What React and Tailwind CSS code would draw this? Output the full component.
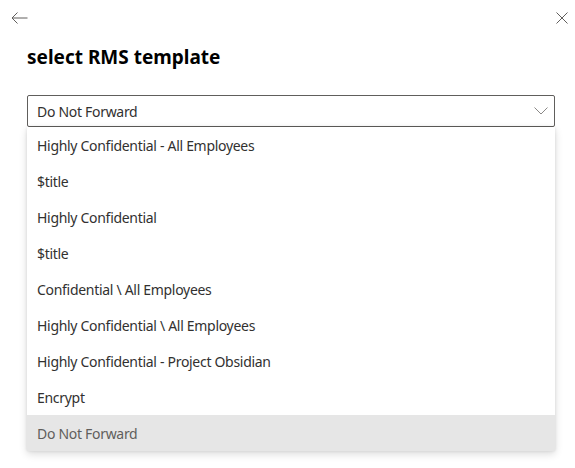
import { useState } from "react";

const options = [
  "Highly Confidential - All Employees",
  "$title",
  "Highly Confidential",
  "$title",
  "Confidential \\ All Employees",
  "Highly Confidential \\ All Employees",
  "Highly Confidential - Project Obsidian",
  "Encrypt",
  "Do Not Forward",
];

const App = () => {
  const [selected, setSelected] = useState("Do Not Forward");

  return (
    <div
      className="w-[575px] h-[468px] bg-white text-[#323130] relative overflow-hidden"
      style={{ fontFamily: '"Segoe UI", "Noto Sans", sans-serif' }}
    >
      {/* Top bar */}
      <div className="flex items-center justify-between pl-[11px] pr-[7px] pt-[9px] h-[26px]">
        <button className="text-[#605e5c]" aria-label="Back">
          <svg width="17" height="12" viewBox="0 0 17 12" fill="none" stroke="currentColor" strokeWidth="1">
            <path d="M16.5 6H1M6.5 0.5L1 6l5.5 5.5" />
          </svg>
        </button>
        <button className="text-[#605e5c]" aria-label="Close">
          <svg width="12" height="12" viewBox="0 0 12 12" fill="none" stroke="currentColor" strokeWidth="1">
            <path d="M0.5 0.5l11 11M11.5 0.5l-11 11" />
          </svg>
        </button>
      </div>

      <div className="px-[27px] pr-[20px]">
        <h1 className="text-[19px] font-bold text-black leading-[26px] mt-[18px]">select RMS template</h1>

        {/* Dropdown */}
        <div className="mt-[25px] relative">
          <div className="h-[32px] border border-[#605e5c] rounded-[2px] flex items-center justify-between pl-[9px] pr-[6px]">
            <span className="text-[14px] tracking-[-0.3px] text-[#323130]">{selected}</span>
            <svg width="14" height="8" viewBox="0 0 14 8" fill="none" stroke="#8a8886" strokeWidth="1">
              <path d="M0.5 0.5L7 7l6.5-6.5" />
            </svg>
          </div>

          <ul className="bg-white shadow-[0_3px_8px_rgba(0,0,0,0.14),0_0_3px_rgba(0,0,0,0.1)]">
            {options.map((opt, i) => {
              const isSel = opt === selected;
              return (
                <li
                  key={i}
                  onClick={() => setSelected(opt)}
                  className={
                    isSel
                      ? "h-[36px] flex items-center pl-[10px] text-[14px] tracking-[-0.3px] bg-[#e6e6e6] text-[#605e5c] cursor-pointer"
                      : "h-[36px] flex items-center pl-[10px] text-[14px] tracking-[-0.3px] text-[#323130] cursor-pointer hover:bg-[#f3f2f1]"
                  }
                >
                  {opt}
                </li>
              );
            })}
          </ul>
        </div>
      </div>
    </div>
  );
};

export default App;
